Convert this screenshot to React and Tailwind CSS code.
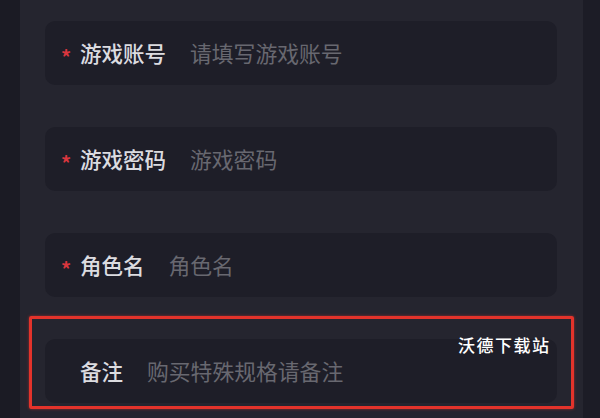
export default function App() {
  const rows = [
    { label: "游戏账号", ph: "请填写游戏账号", req: true },
    { label: "游戏密码", ph: "游戏密码", req: true },
    { label: "角色名", ph: "角色名", req: true },
    { label: "备注", ph: "购买特殊规格请备注", req: false },
  ];
  return (
    <div
      className="relative w-[600px] h-[418px] flex overflow-hidden bg-[#25252f]"
      style={{ fontFamily: '"Noto Sans CJK SC", "Noto Sans", sans-serif' }}
    >
      <div className="w-[20px] h-full bg-[#1b1b24]" />
      <div className="flex-1 flex flex-col gap-[42px] pt-[21px] pl-[25px] pr-[26px]">
        {rows.map((r) => (
          <div
            key={r.label}
            className="h-[64px] shrink-0 rounded-[10px] bg-[#1e1e28] flex items-center pl-[16px]"
          >
            <span
              className={`w-[19px] text-[20px] leading-none translate-y-[4px] font-bold ${r.req ? "text-[#d9363e]" : "text-transparent"}`}
            >
              *
            </span>
            <span className="text-[21.5px] leading-none text-[#dcdce0] font-medium">{r.label}</span>
            <span className="ml-[24px] text-[21.8px] leading-none text-[#686870]">{r.ph}</span>
          </div>
        ))}
      </div>
      <div className="w-[17px] h-full bg-[#1c1c26]" />
      <div className="absolute left-[29px] top-[316px] w-[545px] h-[93px] border-[3px] border-[#e3332b] rounded-[2px] shadow-[0_0_3px_rgba(227,51,43,0.6)]" />
      <div className="absolute left-[458px] top-[332px] text-[17px] leading-[26px] tracking-[1.5px] text-white font-medium">
        沃德下载站
      </div>
    </div>
  );
}
